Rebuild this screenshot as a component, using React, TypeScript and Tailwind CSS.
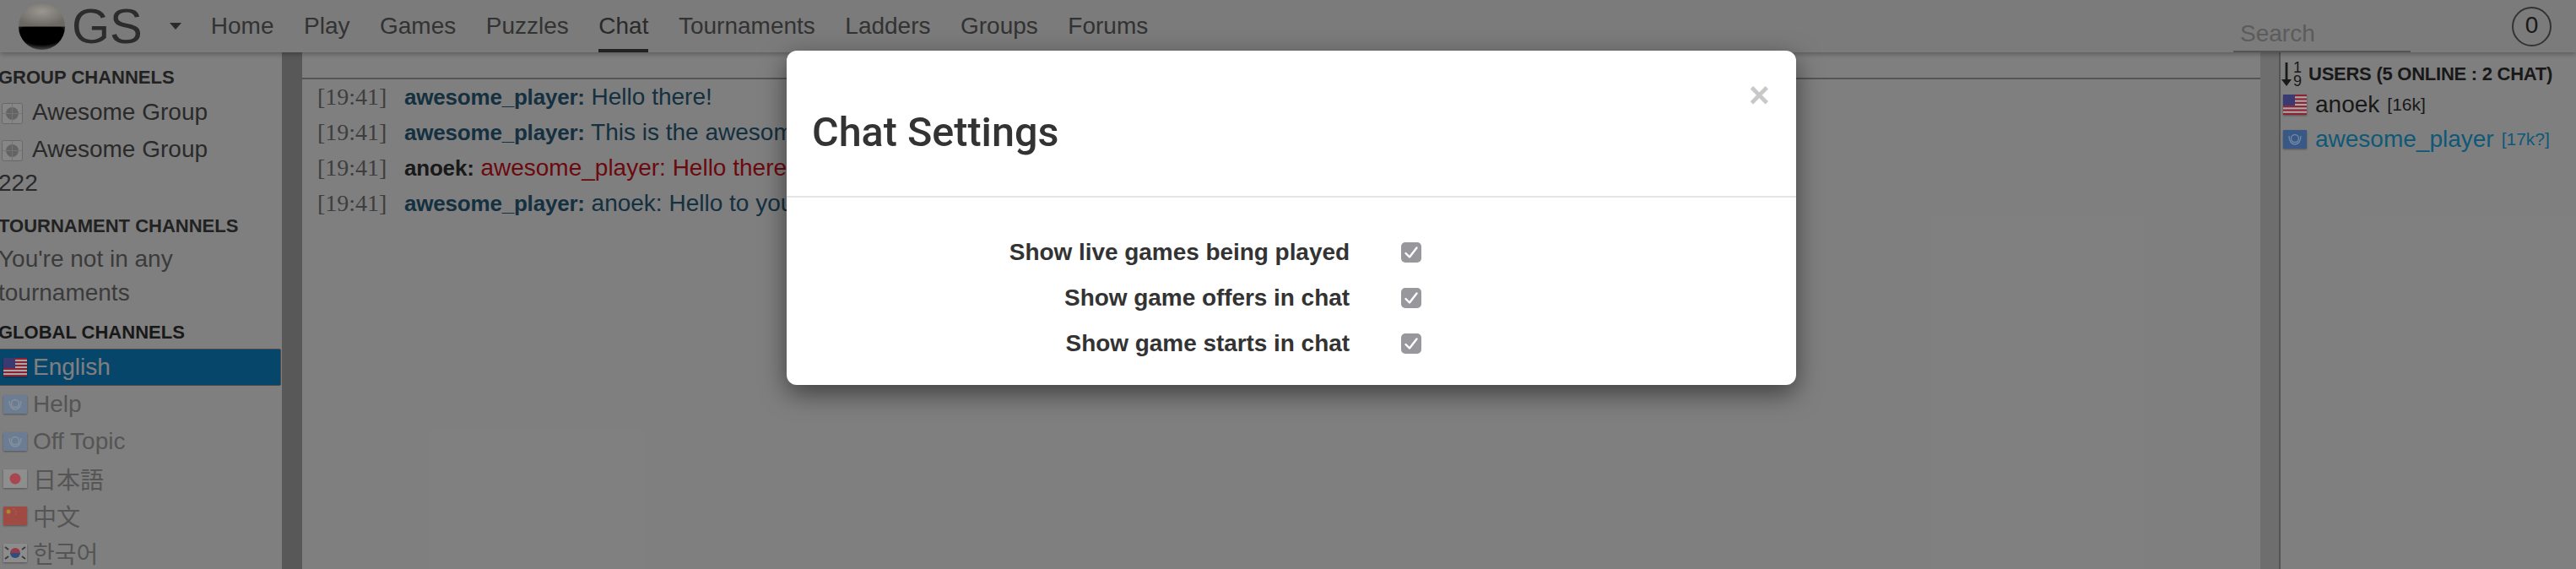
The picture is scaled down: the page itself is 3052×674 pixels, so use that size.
import React from 'react';

const navItems = ['Home', 'Play', 'Games', 'Puzzles', 'Chat', 'Tournaments', 'Ladders', 'Groups', 'Forums'];

// flags sit above the backdrop, so their colours are the already dimmed ones
const flagClass = 'relative z-20 h-[22px] w-[28px] shrink-0 blur-[0.5px] drop-shadow-[0_1px_1px_rgba(0,0,0,0.35)]';

const UsFlag = ({ className = flagClass }: { className?: string }) => (
    <svg viewBox="0 0 28 22" preserveAspectRatio="none" className={className}>
        <rect width="28" height="22" fill="#a8a8a8" />
        {[0, 4, 8, 12, 16, 20].map((y) => (
            <rect key={y} y={y} width="28" height="2" fill="#8e2233" />
        ))}
        <rect width="14" height="12" fill="#3a3a72" />
    </svg>
);

const UnFlag = ({ dim }: { dim?: boolean }) => (
    <svg viewBox="0 0 28 22" className={flagClass}>
        <rect width="28" height="22" rx="1" fill={dim ? '#6c7c92' : '#3a5885'} />
        <circle cx="14" cy="10" r="4.5" fill="none" stroke={dim ? '#84919f' : '#6f86a4'} strokeWidth="1.4" />
        <path d="M7 7c0 6 3 10 7 10s7-4 7-10" fill="none" stroke={dim ? '#84919f' : '#6f86a4'} strokeWidth="1.4" />
    </svg>
);

const JapanFlag = () => (
    <svg viewBox="0 0 28 22" className={flagClass}>
        <rect width="28" height="22" fill="#8e8e8e" />
        <circle cx="14" cy="11" r="6.5" fill="#a8474f" />
    </svg>
);

const ChinaFlag = () => (
    <svg viewBox="0 0 28 22" className={flagClass}>
        <rect width="28" height="22" fill="#a04a44" />
        <circle cx="6" cy="6" r="2.5" fill="#a88a30" />
        <path d="M11 3h3M14 6h2M14 9h2" stroke="#a5663c" strokeWidth="1.2" />
    </svg>
);

const KoreaFlag = () => (
    <svg viewBox="0 0 28 22" className={flagClass}>
        <rect width="28" height="22" fill="#8c8c8c" />
        <path d="M8 11a6 6 0 0 1 12 0z" fill="#943c48" />
        <path d="M8 11a6 6 0 0 0 12 0z" fill="#2e4f7e" />
        <path d="M2 4l4 3M22 7l4-3M2 18l4-3M22 15l4 3" stroke="#3c3c3c" strokeWidth="2" />
    </svg>
);

const GroupIcon = () => (
    <svg viewBox="0 0 25 25" className="relative z-20 ml-[4px] mr-[11px] inline-block h-[25px] w-[25px] align-[-5px]">
        <rect x="0.5" y="0.5" width="24" height="24" rx="2" fill="#868686" stroke="#686868" />
        <circle cx="12.5" cy="12.5" r="7.5" fill="#646464" />
        <path d="M12.5 1v23M1 12.5h23" stroke="#747474" strokeWidth="1" />
    </svg>
);

const Logo = () => (
    <svg viewBox="0 0 56 56" className="relative z-20 ml-[22px] h-[55px] w-[55px]">
        <defs>
            <radialGradient id="stoneTop" cx="50%" cy="35%" r="62%">
                <stop offset="0%" stopColor="#9a9690" />
                <stop offset="100%" stopColor="#6c6965" />
            </radialGradient>
            <radialGradient id="stoneBottom" cx="50%" cy="30%" r="70%">
                <stop offset="68%" stopColor="#000" />
                <stop offset="100%" stopColor="#4a4a4a" />
            </radialGradient>
        </defs>
        <path d="M0 28a28 28 0 0 1 56 0z" fill="url(#stoneTop)" />
        <path d="M0 28a28 28 0 0 0 56 0z" fill="url(#stoneBottom)" />
    </svg>
);

const Message = ({ name, text, red }: { name: string; text: string; red?: boolean }) => (
    <div className="h-[42px] whitespace-nowrap text-[28px] leading-[42px] text-[#2a607e]">
        <span className="inline-block w-[103px] font-['Liberation_Serif',serif] text-[#7c7c7c]">[19:41]</span>
        <span className={name === 'anoek' ? 'text-[26px] font-bold tracking-[-0.2px] text-[#333]' : 'text-[26px] font-bold tracking-[-0.2px] text-[#2a607e]'}>{name}:</span>{' '}
        <span className={red ? 'text-[#d9121f]' : ''}>{text}</span>
    </div>
);

const ChannelRow = ({ flag, label, active, cjk }: { flag: React.ReactNode; label: string; active?: boolean; cjk?: string }) => (
    <div
        className={
            active
                ? 'flex h-[44px] w-[335px] items-center gap-[7px] rounded-[2px] border border-[#999] bg-[#0e8cd6] pl-[5px] text-white'
                : 'flex h-[44px] items-center gap-[7px] pl-[6px] text-[#aaa]'
        }
    >
        {flag}
        <span className={cjk}>{label}</span>
    </div>
);

const SettingRow = ({ label }: { label: string }) => (
    <div className="flex h-[54px] items-center">
        <div className="w-[667px] text-right text-[28px] font-bold tracking-[-0.05px] text-[#333]">{label}</div>
        <div className="ml-[61px] flex h-[24px] w-[24px] items-center justify-center rounded-[5px] bg-[#97979c]">
            <svg viewBox="0 0 24 24" className="h-[24px] w-[24px]">
                <path d="M5.5 13l4.5 4.5 8.5-11" fill="none" stroke="#fff" strokeWidth="2.4" strokeLinecap="round" strokeLinejoin="round" />
            </svg>
        </div>
    </div>
);

export default function App() {
    return (
        <div className="relative flex h-[674px] w-[3052px] flex-col overflow-hidden bg-white font-['Liberation_Sans',sans-serif] text-[28px] text-[#333]">
            <div className="relative flex h-[62px] shrink-0 items-center bg-[#f6f6f6] shadow-[0_2px_6px_rgba(0,0,0,0.3)]">
                <Logo />
                <span className="relative z-20 ml-[8px] text-[58px] leading-none text-[#2c2c2c]">GS</span>
                <svg viewBox="0 0 14 8" className="ml-[32px] h-[8px] w-[14px]">
                    <path d="M0 0h14L7 8z" fill="#555" />
                </svg>
                <nav className="ml-[35px] flex h-full gap-[35.5px]">
                    {navItems.map((item) => (
                        <div
                            key={item}
                            className={
                                item === 'Chat'
                                    ? 'flex h-full items-center border-b-[4px] border-[#444] pt-[4px] text-[#555]'
                                    : 'flex h-full items-center text-[#666]'
                            }
                        >
                            {item}
                        </div>
                    ))}
                </nav>
                <div className="ml-auto flex h-full items-center">
                    <div className="flex h-full w-[210px] items-end border-b-2 border-[#aaa] pb-[1px] pl-[8px] leading-[38px] text-[#b8b8b8]">Search</div>
                    <div className="ml-[120px] mr-[29px] flex h-[47px] w-[47px] items-center justify-center rounded-full border-2 border-[#666] pb-[2px] text-[#333]">0</div>
                </div>
            </div>

            <div className="flex min-h-0 flex-1">
                <aside className="w-[334px] shrink-0 overflow-hidden">
                    <div className="-ml-[2px] w-[335px] pt-[9px]">
                        <div className="h-[40px] text-[22px] font-bold uppercase leading-[42px] text-[#444]">Group Channels</div>
                        <div className="py-[2px] leading-[40px] text-[#555]">
                            <GroupIcon />
                            Awesome Group
                        </div>
                        <div className="py-[2px] leading-[40px] text-[#555]">
                            <GroupIcon />
                            Awesome Group
                            <br />
                            222
                        </div>
                        <div className="mt-[8px] h-[40px] text-[22px] font-bold uppercase leading-[42px] text-[#444]">Tournament Channels</div>
                        <div className="leading-[40px] text-[#777]">
                            You're not in any
                            <br />
                            tournaments
                        </div>
                        <div className="mt-[6px] h-[40px] text-[22px] font-bold uppercase leading-[42px] text-[#333]">Global Channels</div>
                        <ChannelRow active flag={<UsFlag />} label="English" />
                        <ChannelRow flag={<UnFlag dim />} label="Help" />
                        <ChannelRow flag={<UnFlag dim />} label="Off Topic" />
                        <ChannelRow flag={<JapanFlag />} label="日本語" cjk="font-['Noto_Sans_CJK_JP',sans-serif]" />
                        <ChannelRow flag={<ChinaFlag />} label="中文" cjk="font-['Noto_Sans_CJK_SC',sans-serif]" />
                        <ChannelRow flag={<KoreaFlag />} label="한국어" cjk="font-['Noto_Sans_CJK_KR',sans-serif]" />
                    </div>
                </aside>
                <div className="w-[24px] shrink-0 bg-[#b0b0b0]" />

                <main className="min-w-0 flex-1 overflow-hidden">
                    <div className="h-[32px] border-b-2 border-[#aaa]" />
                    <div className="pl-[18px]">
                        <Message name="awesome_player" text="Hello there!" />
                        <Message name="awesome_player" text="This is the awesome chat" />
                        <Message name="anoek" text="awesome_player: Hello there" red />
                        <Message name="awesome_player" text="anoek: Hello to you" />
                    </div>
                </main>

                <div className="w-[22px] shrink-0 bg-[#dcdcdc]" />
                <aside className="w-[352px] shrink-0 overflow-hidden border-l-2 border-[#aaa] pl-[1px] pt-[10px]">
                    <div className="flex h-[31px] items-center">
                        <svg viewBox="0 0 12 28" className="h-[28px] w-[12px]">
                            <path d="M4.6 0h2.8v20H12L6 28 0 20h4.6z" fill="#333" />
                        </svg>
                        <div className="ml-[2px] flex w-[10px] flex-col items-center text-[18px] leading-[16px]">
                            <span>1</span>
                            <span>9</span>
                        </div>
                        <span className="ml-[8px] whitespace-nowrap text-[22px] font-bold uppercase tracking-[-0.25px]">Users (5 online : 2 chat)</span>
                    </div>
                    <div className="flex h-[41px] items-center whitespace-nowrap">
                        <UsFlag className="relative z-20 ml-[2px] h-[24px] w-[28px] shrink-0 blur-[0.5px] drop-shadow-[0_1px_1px_rgba(0,0,0,0.35)]" />
                        <span className="ml-[10px]">anoek</span>
                        <span className="ml-[9px] text-[21px]">[16k]</span>
                    </div>
                    <div className="flex h-[41px] items-center whitespace-nowrap text-[#1cb0f0]">
                        <span className="ml-[2px]"><UnFlag /></span>
                        <span className="ml-[10px]">awesome_player</span>
                        <span className="ml-[9px] text-[21px]">[17k?]</span>
                    </div>
                </aside>
            </div>

            {/* dimmed backdrop with the settings dialog on top */}
            <div className="absolute inset-0 z-10 bg-black/50">
                <div className="relative ml-[932px] mt-[60px] h-[396px] w-[1196px] rounded-[12px] bg-white shadow-[0_10px_30px_rgba(0,0,0,0.5)]">
                    <div className="h-[174px] border-b-2 border-[#e5e5e5] pl-[30px] pt-[67px]">
                        <h3 className="font-['Roboto',sans-serif] text-[48.5px] font-medium leading-[60px] text-[#333]">Chat Settings</h3>
                    </div>
                    <button className="absolute left-[1140px] top-[32px] text-[42px] font-bold leading-none text-[#c8c8c8]">×</button>
                    <div className="pt-[38px]">
                        <SettingRow label="Show live games being played" />
                        <SettingRow label="Show game offers in chat" />
                        <SettingRow label="Show game starts in chat" />
                    </div>
                </div>
            </div>
        </div>
    );
}
